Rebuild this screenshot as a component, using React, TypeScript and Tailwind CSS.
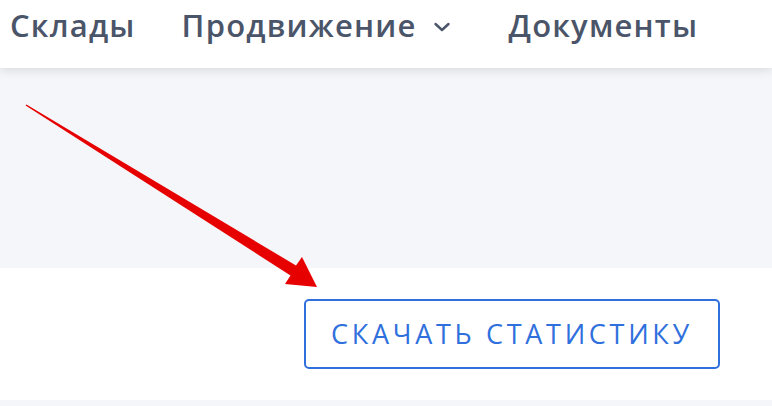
export default function App() {
  return (
    <div className="relative w-[772px] h-[406px] overflow-hidden bg-[#f5f6f9] font-['Open_Sans',sans-serif]">
      <header className="relative z-10 h-[68px] bg-white shadow-[0_2px_10px_rgba(0,0,0,0.12)] flex items-center pb-[17px] pl-[10px] text-[31px] tracking-[1.2px] font-semibold text-[#4b5569]">
        <span>Склады</span>
        <span className="ml-[46px] flex items-center">
          Продвижение
          <svg className="ml-[16px] mt-[2px]" width="18" height="12" viewBox="0 0 18 12" fill="none">
            <path d="M2.5 3 L9 9 L15.5 3" stroke="#4b5569" strokeWidth="2.4" strokeLinecap="round" strokeLinejoin="round" />
          </svg>
        </span>
        <span className="ml-[58px]">Документы</span>
      </header>

      <div className="h-[200px]" />

      <div className="h-[132px] bg-white flex items-center justify-end pr-[52px]">
        <button className="h-[70px] w-[416px] rounded-[5px] border-2 border-[#2f70dd] text-[#2f70dd] text-[27px] tracking-[3.7px] font-normal">
          СКАЧАТЬ СТАТИСТИКУ
        </button>
      </div>

      <svg className="absolute left-0 top-0 pointer-events-none" width="772" height="406" viewBox="0 0 772 406">
        <polygon
          points="26.4,104.4 296,265.5 302,257 317,287 285,284 290.5,275.5 25.6,105.6"
          fill="#e60000"
        />
      </svg>
    </div>
  );
}
